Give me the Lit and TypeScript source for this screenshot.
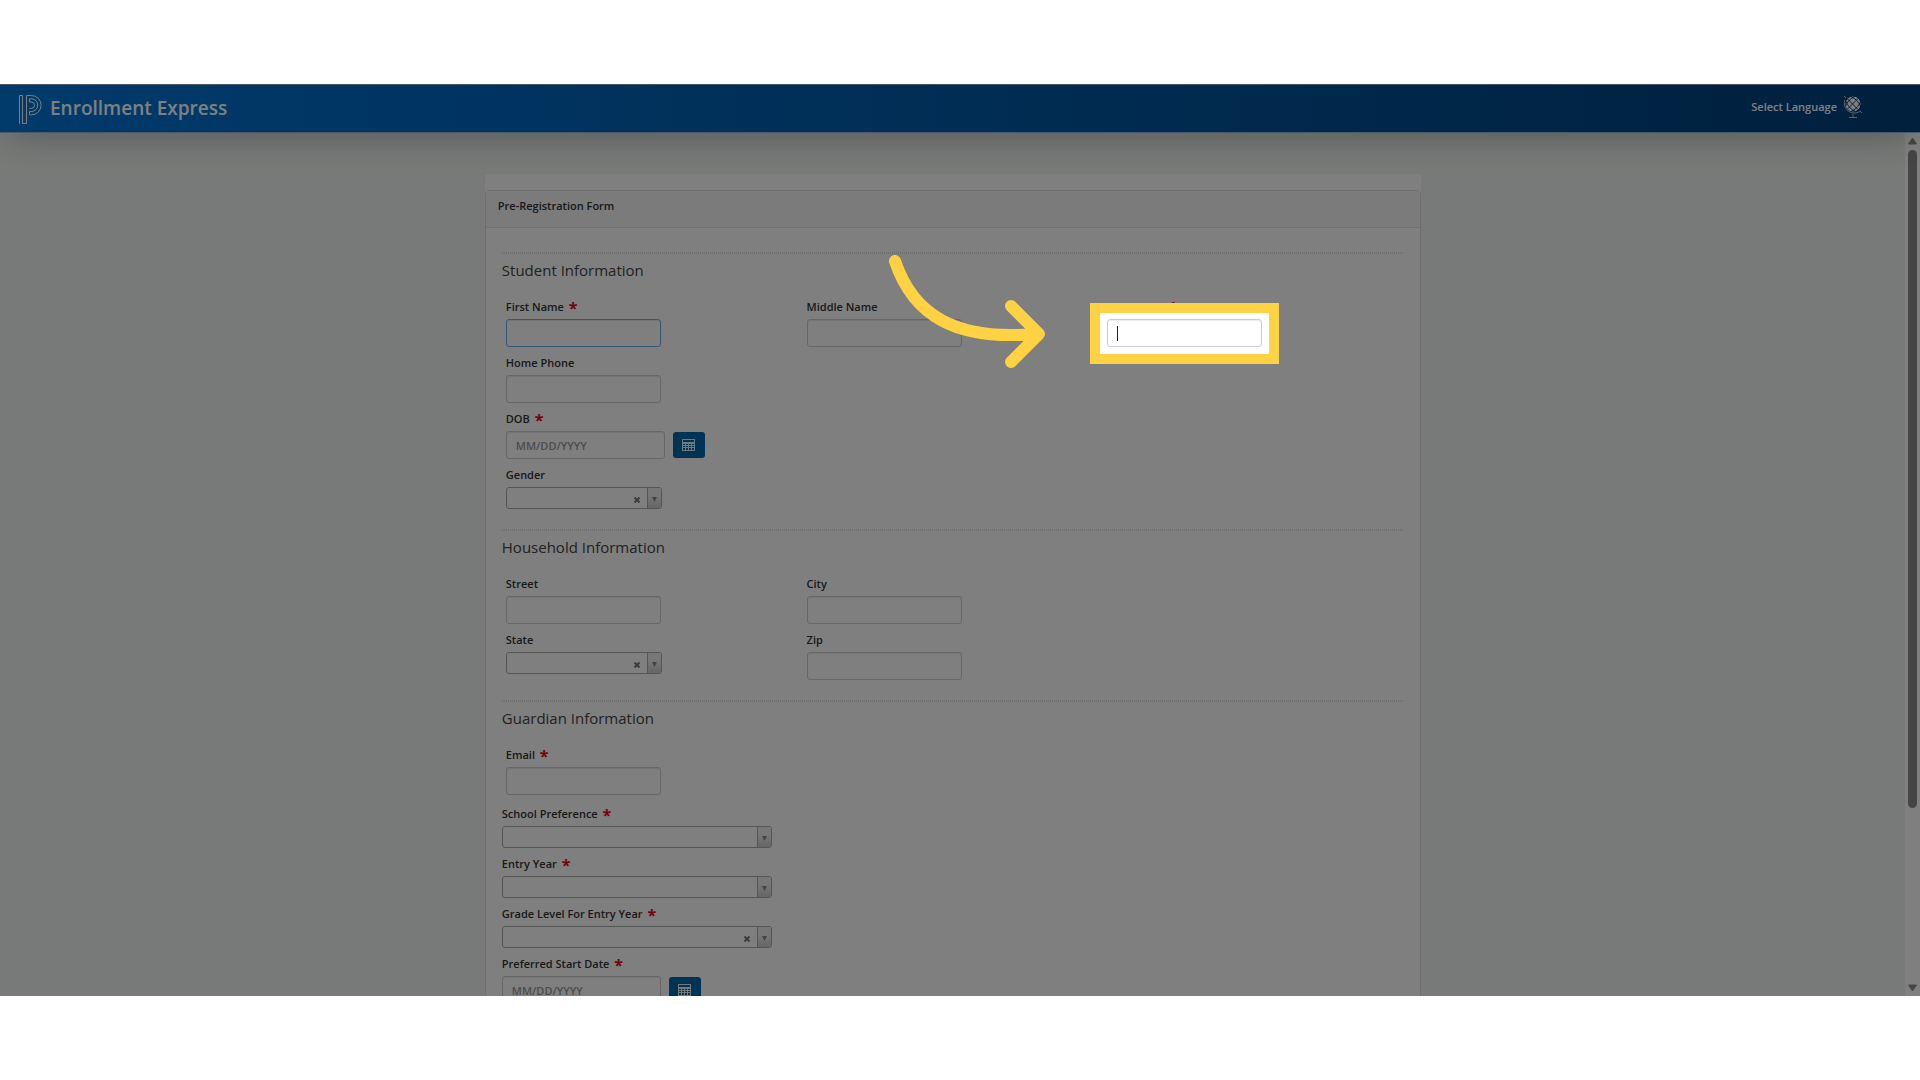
import { LitElement, html, css, svg, nothing } from "lit";
import { customElement } from "lit/decorators.js";

interface Field {
  id: string;
  label: string;
  kind: "text" | "date" | "select";
  required?: boolean;
  clearable?: boolean;
  active?: boolean;
  spotlight?: boolean;
}

const STUDENT: Field[][] = [
  [
    { id: "first", label: "First Name", kind: "text", required: true, active: true },
    { id: "middle", label: "Middle Name", kind: "text" },
    { id: "last", label: "Last Name", kind: "text", required: true, spotlight: true },
  ],
  [{ id: "phone", label: "Home Phone", kind: "text" }],
  [{ id: "dob", label: "DOB", kind: "date", required: true }],
  [{ id: "gender", label: "Gender", kind: "select", clearable: true }],
];

const HOUSEHOLD: Field[][] = [
  [
    { id: "street", label: "Street", kind: "text" },
    { id: "city", label: "City", kind: "text" },
  ],
  [
    { id: "state", label: "State", kind: "select", clearable: true },
    { id: "zip", label: "Zip", kind: "text" },
  ],
];

const GUARDIAN: Field[][] = [[{ id: "email", label: "Email", kind: "text", required: true }]];

const ENROLLMENT: Field[] = [
  { id: "school", label: "School Preference", kind: "select", required: true },
  { id: "year", label: "Entry Year", kind: "select", required: true },
  { id: "grade", label: "Grade Level For Entry Year", kind: "select", required: true, clearable: true },
  { id: "start", label: "Preferred Start Date", kind: "date", required: true },
];

const logo = svg`
  <svg class="logo" viewBox="0 0 24 30" fill="none" stroke="#fff" stroke-width="1" aria-hidden="true">
    <path d="M1.500 29.500V1.500H4.500V29.500H8.500V1.500H13.500A9.600 9.700 0 0 1 13.500 20.900H11.500V17.500H13.500A6.200 6.300 0 0 0 13.500 4.800H11.500V8H13.500A3 3.200 0 0 1 13.500 14.400H11.500"/>
  </svg>`;

const globe = svg`
  <svg class="globe" viewBox="0 0 20 24" fill="none" stroke="#fff" aria-hidden="true">
    <circle cx="10" cy="9" r="7.500" fill="#fff" stroke="none"/>
    <path stroke="#00407a" stroke-width="1" d="M4.500 4L15 14.500M7.500 1.500C12 3 16 7 17.500 11.500M3 6.500C4.500 11 8 14.500 12.500 16.500M15 3.500L4.500 14M11.500 1.500C7 4 4 7 2.500 11M17.500 7C15.500 11.500 12.500 14.500 8 16.500"/>
    <path stroke-width="1" stroke-opacity=".7" d="M1 1L3 3M17 16L19 18M1.500 5C0 12 5 18.500 12 18C14.500 17.800 16 17 17.500 16M10 18.500V22M6 22.500H14"/>
  </svg>`;

const calendar = svg`
  <svg class="cal" viewBox="0 0 13 12" aria-hidden="true">
    <path fill="#fff" fill-opacity=".9" fill-rule="evenodd" d="M0 0H13V12H0ZM1 1V3H12V1ZM1 5V6H3V5ZM4 5V6H6V5ZM7 5V6H9V5ZM10 5V6H12V5ZM1 7V8H3V7ZM4 7V8H6V7ZM7 7V8H9V7ZM10 7V8H12V7ZM1 9V11H3V9ZM4 9V11H6V9ZM7 9V11H9V9ZM10 9V11H12V9Z"/>
  </svg>`;

@customElement("app-root")
export class AppRoot extends LitElement {
  static styles = css`
    :host {
      display: block;
      box-sizing: border-box;
      min-height: 100vh;
      padding: 84px 0;
      background: #fff;
      color: #444;
      font: 600 11px/24px "Open Sans", sans-serif;
    }
    *, *::before, *::after { box-sizing: border-box; }
    .stage {
      position: relative;
      display: flex;
      flex-direction: column;
      height: calc(100vh - 168px);
      overflow: hidden;
      background: #f1f5f2;
    }
    .bar {
      position: relative;
      z-index: 1;
      display: flex;
      align-items: center;
      flex: none;
      height: 49px;
      padding: 0 57px 0 18px;
      color: #fff;
      background: linear-gradient(90deg, #0076d8, #00407a);
      border: solid #8fb0d0;
      border-width: 1px 0;
      box-shadow: 0 10px 36px -8px rgba(0, 0, 0, 0.3);
    }
    .logo { width: 24px; height: 30px; }
    .brand { margin: 0 auto 0 8px; padding-bottom: 2px; font-size: 19px; line-height: 24px; font-weight: 600; }
    .lang {
      display: flex;
      align-items: center;
      gap: 6px;
      padding: 0 0 4px;
      border: 0;
      background: none;
      color: inherit;
      font: inherit;
    }
    .globe { width: 20px; height: 24px; }
    .view { display: flex; flex: 1; min-height: 0; }
    .page { flex: 1; min-width: 0; }
    .sheet { width: 49.15%; margin: 41px auto 0 25.45%; padding-top: 16px; background: #fff; }
    .panel { border: 1px solid #ddd; border-radius: 4px 4px 0 0; }
    .title {
      margin: 0;
      height: 37px;
      padding: 3px 12px;
      border-bottom: 1px solid #e0e0e0;
      background: #f6f6f6;
      font: inherit;
      color: #333;
    }
    .body { padding: 24px 16px; }
    .section { margin: 0 0 20px; }
    .section::before {
      content: "";
      display: block;
      height: 2px;
      background: repeating-linear-gradient(90deg, #dedede 0 1px, #fff 1px 2px);
    }
    .heading { margin: 0; padding: 4px 0 13px; font-size: 15px; line-height: 24px; font-weight: 400; color: #444; }
    .section.last { margin-bottom: 7px; }
    .rows { display: flex; flex-direction: column; gap: 4px; }
    .inset { margin: 0 -4px 0 4px; }
    .row { display: grid; grid-template-columns: repeat(3, 1fr); }
    .field { min-width: 0; }
    .label { display: block; width: max-content; color: #333; }
    .star { margin-left: 2px; color: #f00014; font-size: 16px; font-weight: 700; line-height: 16px; vertical-align: -3px; }
    .control { position: relative; display: flex; gap: 8px; width: max-content; }
    .text {
      width: 155px;
      height: 28px;
      padding: 0 9px;
      border: 1px solid #ccc;
      border-radius: 3px;
      background: #fff;
      box-shadow: inset 0 1px 1px rgba(0, 0, 0, 0.08);
      font: inherit;
      color: #444;
      outline: none;
    }
    .text::placeholder { color: #999; opacity: 1; }
    .text.date { width: 159px; }
    .text.active { border-color: #66afe9; }
    .pick {
      display: grid;
      place-items: center;
      align-self: center;
      width: 32px;
      height: 26px;
      padding: 0;
      border: 0;
      border-radius: 3px;
      background: #0068aa;
    }
    .cal { width: 13px; height: 12px; }
    .combo {
      display: flex;
      width: 156px;
      height: 22px;
      border: 1px solid #aaa;
      border-radius: 3px;
      background: #fff;
      overflow: hidden;
    }
    .combo.wide { width: 270px; }
    .select { flex: 1; min-width: 0; appearance: none; border: 0; background: none; font: inherit; outline: none; }
    .clear {
      display: grid;
      place-items: center;
      width: 20px;
      padding: 4px 0 0;
      border: 0;
      background: none;
    }
    .clear svg { width: 6px; height: 6px; }
    .drop {
      display: grid;
      place-items: center;
      width: 14px;
      padding-top: 3px;
      border-left: 1px solid #aaa;
      background: linear-gradient(0deg, #ccc, #eee 60%);
    }
    .drop svg { width: 5px; height: 5px; }

    /* Tutorial layer: everything but the framed field is dimmed. */
    .spot {
      position: absolute;
      z-index: 5;
      inset: -6px -7px -7px;
      box-shadow: 0 0 0 10px #ffd244, 0 0 0 2400px rgba(0, 0, 0, 0.5);
      pointer-events: none;
    }
    .caret { position: absolute; z-index: 6; left: 10px; top: 7px; width: 1px; height: 15px; background: #222; }
    .arrow { position: absolute; z-index: 6; right: 100%; top: 50%; width: 160px; height: 120px; margin: -78px 60px 0 0; }

    .scroll {
      display: flex;
      flex-direction: column;
      align-items: center;
      width: 15px;
      padding: 4px 0;
      background: #fff;
    }
    .scroll svg { width: 9px; height: 8px; flex: none; }
    .thumb { width: 9px; flex: 0 0 658px; margin: 5px 0 auto; border-radius: 5px; background: #8b8b8b; }
  `;

  private renderControl(f: Field, wide: boolean) {
    if (f.kind === "select") {
      return html`<div class="combo ${wide ? "wide" : ""}">
        <select class="select" id=${f.id}><option></option></select>
        ${f.clearable
          ? html`<button class="clear" type="button" aria-label="Clear ${f.label}">
              <svg viewBox="0 0 6 6" stroke="#777" stroke-width="2"><path d="M.5 .5L5.500 5.500M5.500 .5L.5 5.500" /></svg>
            </button>`
          : nothing}
        <span class="drop"><svg viewBox="0 0 5 5" fill="#888"><path d="M0 0H5L2.500 5Z" /></svg></span>
      </div>`;
    }
    if (f.kind === "date") {
      return html`<div class="control">
        <input class="text date" id=${f.id} type="text" placeholder="MM/DD/YYYY" />
        <button class="pick" type="button" aria-label="Choose ${f.label}">${calendar}</button>
      </div>`;
    }
    return html`<div class="control">
      <input class="text ${f.active ? "active" : ""}" id=${f.id} type="text" />
      ${f.spotlight
        ? html`<span class="spot"></span><span class="caret"></span>
            <svg class="arrow" viewBox="0 0 160 120" fill="none" stroke="#ffd244" stroke-width="12" stroke-linecap="round" stroke-linejoin="round" aria-hidden="true">
              <path d="M8 6C26 60 68 86 148 79M124 51L152 79L124 107" />
            </svg>`
        : nothing}
    </div>`;
  }

  private renderField(f: Field, wide = false) {
    return html`<div class="field">
      <label class="label" for=${f.id}>${f.label}${f.required ? html` <span class="star">*</span>` : nothing}</label>
      ${this.renderControl(f, wide)}
    </div>`;
  }

  private renderSection(title: string, rows: Field[][], last = false) {
    return html`<section class="section ${last ? "last" : ""}">
      <h2 class="heading">${title}</h2>
      <div class="rows inset">
        ${rows.map((r) => html`<div class="row">${r.map((f) => this.renderField(f))}</div>`)}
      </div>
    </section>`;
  }

  render() {
    return html`<div class="stage">
      <header class="bar">
        ${logo}
        <h1 class="brand">Enrollment Express</h1>
        <button class="lang" type="button">Select Language ${globe}</button>
      </header>
      <div class="view">
        <main class="page">
          <div class="sheet">
            <form class="panel">
              <h2 class="title">Pre-Registration Form</h2>
              <div class="body">
                ${this.renderSection("Student Information", STUDENT)}
                ${this.renderSection("Household Information", HOUSEHOLD)}
                ${this.renderSection("Guardian Information", GUARDIAN, true)}
                <div class="rows">${ENROLLMENT.map((f) => this.renderField(f, true))}</div>
              </div>
            </form>
          </div>
        </main>
        <div class="scroll" aria-hidden="true">
          <svg viewBox="0 0 9 8" fill="#8b8b8b"><path d="M4.500 1L8.500 7H.5Z" stroke="#8b8b8b" stroke-linejoin="round" /></svg>
          <span class="thumb"></span>
          <svg viewBox="0 0 9 8" fill="#8b8b8b"><path d="M4.500 7L.5 1H8.500Z" stroke="#8b8b8b" stroke-linejoin="round" /></svg>
        </div>
      </div>
    </div>`;
  }
}
